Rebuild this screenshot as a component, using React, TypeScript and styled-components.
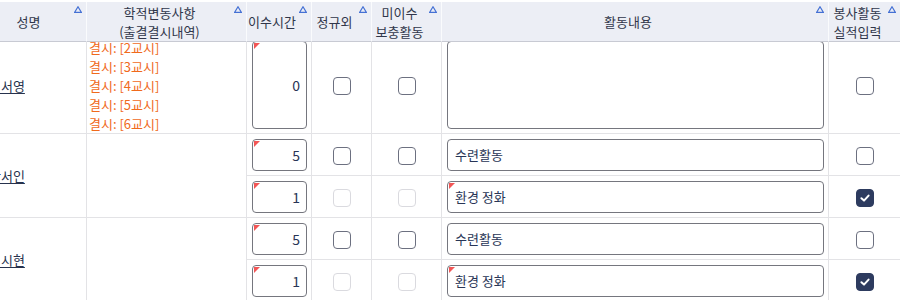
import React, { useLayoutEffect, useRef } from "react";
import styled, { createGlobalStyle } from "styled-components";

const GlobalStyle = createGlobalStyle`
  html, body {
    margin: 0;
    padding: 0;
    background: #fff;
  }
  body {
    font-family: "Noto Sans CJK KR", "Noto Sans", sans-serif;
    color: #283556;
  }
`;

const Frame = styled.div`
  width: 900px;
  height: 300px;
  padding-top: 2px;
  box-sizing: border-box;
  background: #fff;
  overflow: hidden;
`;

const Scroller = styled.div`
  width: 900px;
  height: 298px;
  overflow: hidden;
`;

const Table = styled.table`
  width: 916px;
  table-layout: fixed;
  border-collapse: separate;
  border-spacing: 0;
  font-size: 13px;
`;

const HeadCell = styled.th`
  position: sticky;
  top: 0;
  z-index: 3;
  height: 40px;
  padding: 0 14px 0 0;
  box-sizing: border-box;
  background: #eceef5;
  border-right: 1px solid #fafbfd;
  border-bottom: 1px solid #c8cad3;
  color: #30364a;
  font-weight: 400;
  font-size: 13px;
  line-height: 19px;
  text-align: center;
  white-space: nowrap;
`;

const SortMark = styled.svg`
  position: absolute;
  top: 4px;
  right: 4px;
  width: 8px;
  height: 7px;
`;

const Cell = styled.td<{ $align?: string }>`
  padding: 4px 4px 4px 5px;
  box-sizing: border-box;
  border-right: 1px solid #e3e3e6;
  border-bottom: 1px solid #e3e3e6;
  vertical-align: middle;
  text-align: ${({ $align }) => $align || "center"};
`;

const Row = styled.tr<{ $h: number }>`
  height: ${({ $h }) => $h}px;
`;

const NameCell = styled(Cell)`
  padding: 0 0 0 4px;
  text-align: left;
`;

const Name = styled.a`
  color: #27324d;
  text-decoration: underline;
  text-underline-offset: 2px;
  font-size: 13px;
  white-space: nowrap;
`;

const AbsenceCell = styled(Cell)`
  padding: 0 0 0 2px;
  text-align: left;
`;

const Absence = styled.div`
  color: #f06a1c;
  font-size: 13px;
  line-height: 19px;
  white-space: nowrap;
`;

const Field = styled.div<{ $mark?: boolean }>`
  position: relative;

  &::before {
    content: "";
    display: ${({ $mark }) => ($mark ? "block" : "none")};
    position: absolute;
    top: 2px;
    left: 2px;
    border-top: 6px solid #f25656;
    border-right: 6px solid transparent;
  }
`;

const TextBox = styled.input<{ $right?: boolean }>`
  display: block;
  width: 100%;
  height: 32px;
  box-sizing: border-box;
  border: 1px solid #75767e;
  border-radius: 4px;
  padding: 0 ${({ $right }) => ($right ? "6px" : "7px")};
  font-family: "Noto Sans CJK KR", "Noto Sans", sans-serif;
  font-size: 13px;
  color: #283556;
  text-align: ${({ $right }) => ($right ? "right" : "left")};
  background: #fff;
  outline: none;
`;

const NumBox = styled(TextBox)`
  font-size: 14px;
`;

const TallNum = styled(NumBox)`
  height: 88px;
`;

const Memo = styled.textarea`
  display: block;
  width: 100%;
  height: 88px;
  box-sizing: border-box;
  border: 1px solid #75767e;
  border-radius: 4px;
  resize: none;
  background: #fff;
  outline: none;
`;

const Check = styled.span<{ $checked?: boolean; $disabled?: boolean }>`
  display: inline-flex;
  align-items: center;
  justify-content: center;
  width: 18px;
  height: 18px;
  box-sizing: border-box;
  border-radius: 4px;
  vertical-align: middle;
  border: 1.5px solid
    ${({ $checked, $disabled }) =>
      $checked ? "#2d3b5f" : $disabled ? "#dadadf" : "#6c7080"};
  background: ${({ $checked }) => ($checked ? "#2d3b5f" : "#fff")};
`;

const Sort = () => (
  <SortMark viewBox="0 0 8 7">
    <polygon points="4,0.8 7.3,6.3 0.7,6.3" fill="none" stroke="#4470d4" strokeWidth="1.2" />
  </SortMark>
);

const Head = ({ children }: { children: React.ReactNode }) => (
  <HeadCell>
    {children}
    <Sort />
  </HeadCell>
);

const CheckBox = ({ checked, disabled }: { checked?: boolean; disabled?: boolean }) => (
  <Check $checked={checked} $disabled={disabled}>
    {checked && (
      <svg width="12" height="12" viewBox="0 0 12 12">
        <path d="M2.4 6.2 L5 8.6 L9.6 3.6" fill="none" stroke="#fff" strokeWidth="2" strokeLinecap="round" strokeLinejoin="round" />
      </svg>
    )}
  </Check>
);

type Sub = { hours: string; activity: string; mark: boolean; done: boolean };

const students: { name: string; subs: Sub[] }[] = [
  {
    name: "박서인",
    subs: [
      { hours: "5", activity: "수련활동", mark: false, done: false },
      { hours: "1", activity: "환경 정화", mark: true, done: true },
    ],
  },
  {
    name: "최시현",
    subs: [
      { hours: "5", activity: "수련활동", mark: false, done: false },
      { hours: "1", activity: "환경 정화", mark: true, done: true },
    ],
  },
];

const absences = ["2", "3", "4", "5", "6"];

export default function App() {
  const ref = useRef<HTMLDivElement>(null);

  // the grid is shown scrolled a little down and to the right
  useLayoutEffect(() => {
    if (ref.current) {
      ref.current.scrollTop = 5;
      ref.current.scrollLeft = 15;
    }
  }, []);

  return (
    <Frame>
      <GlobalStyle />
      <Scroller ref={ref}>
        <Table>
          <colgroup>
            <col style={{ width: 102 }} />
            <col style={{ width: 160 }} />
            <col style={{ width: 65 }} />
            <col style={{ width: 60 }} />
            <col style={{ width: 70 }} />
            <col style={{ width: 387 }} />
            <col style={{ width: 72 }} />
          </colgroup>
          <thead>
            <tr>
              <Head>성명</Head>
              <Head>
                학적변동사항
                <br />
                (출결결시내역)
              </Head>
              <Head>이수시간</Head>
              <Head>정규외</Head>
              <Head>
                미이수
                <br />
                보충활동
              </Head>
              <Head>활동내용</Head>
              <Head>
                봉사활동
                <br />
                실적입력
              </Head>
            </tr>
          </thead>
          <tbody>
            <Row $h={96}>
              <NameCell>
                <Name>이서영</Name>
              </NameCell>
              <AbsenceCell>
                {absences.map((p) => (
                  <Absence key={p}>결시: [{p}교시]</Absence>
                ))}
              </AbsenceCell>
              <Cell>
                <Field $mark>
                  <TallNum $right readOnly value="0" />
                </Field>
              </Cell>
              <Cell>
                <CheckBox />
              </Cell>
              <Cell>
                <CheckBox />
              </Cell>
              <Cell>
                <Field>
                  <Memo readOnly value="" />
                </Field>
              </Cell>
              <Cell>
                <CheckBox />
              </Cell>
            </Row>
            {students.map((s) =>
              s.subs.map((sub, i) => (
                <Row $h={42} key={s.name + i}>
                  {i === 0 && (
                    <>
                      <NameCell rowSpan={s.subs.length}>
                        <Name>{s.name}</Name>
                      </NameCell>
                      <AbsenceCell rowSpan={s.subs.length} />
                    </>
                  )}
                  <Cell>
                    <Field $mark>
                      <NumBox $right readOnly value={sub.hours} />
                    </Field>
                  </Cell>
                  <Cell>
                    <CheckBox disabled={i > 0} />
                  </Cell>
                  <Cell>
                    <CheckBox disabled={i > 0} />
                  </Cell>
                  <Cell>
                    <Field $mark={sub.mark}>
                      <TextBox readOnly value={sub.activity} />
                    </Field>
                  </Cell>
                  <Cell>
                    <CheckBox checked={sub.done} />
                  </Cell>
                </Row>
              ))
            )}
          </tbody>
        </Table>
      </Scroller>
    </Frame>
  );
}
